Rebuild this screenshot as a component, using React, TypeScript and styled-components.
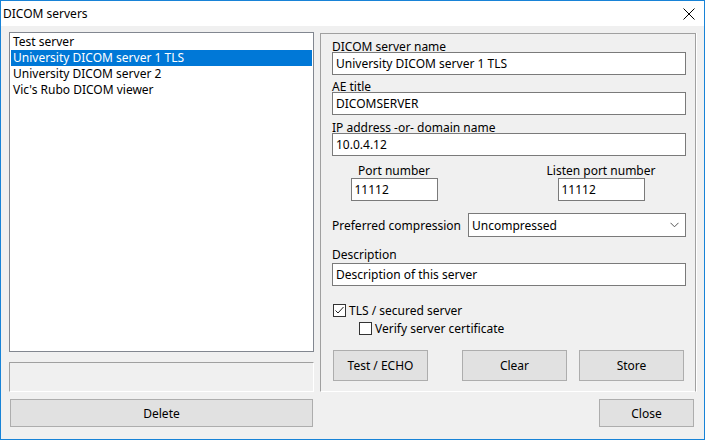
import React from 'react'
import styled, { createGlobalStyle } from 'styled-components'

const GlobalStyle = createGlobalStyle`
  html, body {
    margin: 0;
    padding: 0;
    background: #f0f0f0;
  }
  body {
    font-family: 'Noto Sans', 'Liberation Sans', sans-serif;
    font-size: 12px;
    color: #000;
  }
`

const Window = styled.div`
  width: 705px;
  height: 440px;
  box-sizing: border-box;
  border: 1px solid #1883d7;
  background: #f0f0f0;
  display: flex;
  flex-direction: column;
`

const TitleBar = styled.div`
  height: 25px;
  background: #fff;
  display: flex;
  align-items: center;
  justify-content: space-between;
  padding: 0 9px 0 2px;
`

const TitleText = styled.span`
  font-size: 12px;
  line-height: 16px;
`

const Body = styled.div`
  flex: 1;
  display: flex;
  flex-direction: column;
  padding: 6px 8px 11px 8px;
`

const Main = styled.div`
  display: grid;
  grid-template-columns: 305px 1fr;
  column-gap: 6px;
`

const LeftColumn = styled.div`
  display: flex;
  flex-direction: column;
`

const ListBox = styled.div`
  height: 320px;
  box-sizing: border-box;
  background: #fff;
  border: 1px solid #828790;
  padding: 1px;
`

const ListItem = styled.div<{ $selected?: boolean }>`
  height: 16px;
  line-height: 16px;
  padding-left: 2px;
  white-space: nowrap;
  background: ${({ $selected }) => ($selected ? '#0078d7' : 'transparent')};
  color: ${({ $selected }) => ($selected ? '#fff' : '#000')};
`

const StatusBox = styled.div`
  margin-top: 10px;
  height: 30px;
  box-sizing: border-box;
  border: 1px solid #a0a0a0;
  border-right-color: #fff;
  border-bottom-color: #fff;
`

const Panel = styled.div`
  margin-top: 1px;
  height: 359px;
  box-sizing: border-box;
  border: 1px solid #a0a0a0;
  border-bottom-color: #fff;
  box-shadow: 1px 0 0 #fff;
  padding: 4px 9px 0 11px;
  display: flex;
  flex-direction: column;
`

// labels sit low, right on top of their box
const FieldLabel = styled.label<{ $top?: number; $below?: number }>`
  display: block;
  line-height: 10px;
  padding-top: ${({ $top }) => ($top === undefined ? 7 : $top)}px;
  margin-bottom: ${({ $below }) => $below || 0}px;
  white-space: nowrap;
`

const TextBox = styled.div<{ $width?: number }>`
  height: 23px;
  box-sizing: border-box;
  width: ${({ $width }) => ($width ? `${$width}px` : '100%')};
  background: #fff;
  border: 1px solid #7a7a7a;
  padding: 0 3px;
  line-height: 21px;
  white-space: nowrap;
`

const PortRow = styled.div`
  display: flex;
  gap: 87px;
  padding-left: 2px;
  margin-top: 10px;
`

const PortField = styled.div`
  width: 120px;
  display: flex;
  flex-direction: column;
  align-items: center;
`

const CompressionRow = styled.div`
  display: flex;
  align-items: center;
  justify-content: space-between;
  margin-top: 12px;
`

const Select = styled.div`
  width: 218px;
  height: 24px;
  box-sizing: border-box;
  background: #fff;
  border: 1px solid #7a7a7a;
  padding: 0 6px 0 3px;
  display: flex;
  align-items: center;
  justify-content: space-between;
`

const CheckList = styled.div`
  margin-top: 17px;
  display: flex;
  flex-direction: column;
  gap: 3px;
`

const CheckRow = styled.div<{ $indent?: number }>`
  display: flex;
  align-items: center;
  gap: 3px;
  padding-left: ${({ $indent }) => $indent || 1}px;
  line-height: 15px;
`

const Box = styled.span`
  width: 13px;
  height: 13px;
  box-sizing: border-box;
  border: 1px solid #333;
  background: #fff;
  display: inline-flex;
  align-items: center;
  justify-content: center;
`

const ButtonRow = styled.div`
  display: flex;
  margin-top: 14px;
  padding-left: 1px;
`

const Button = styled.button<{ $width: number; $height?: number; $gap?: number }>`
  width: ${({ $width }) => $width}px;
  height: ${({ $height }) => $height || 31}px;
  margin-left: ${({ $gap }) => $gap || 0}px;
  box-sizing: border-box;
  background: #e1e1e1;
  border: 1px solid #adadad;
  font-family: inherit;
  font-size: 12px;
  color: #000;
  padding: 0;
`

const Footer = styled.div`
  display: flex;
  justify-content: space-between;
  margin-top: 7px;
  padding: 0 2px 0 1px;
`

const Check = () => (
  <svg width="11" height="11" viewBox="0 0 11 11">
    <path d="M1.5 5.5 L4 8 L9.5 2" fill="none" stroke="#222" strokeWidth="1" />
  </svg>
)

const Chevron = () => (
  <svg width="9" height="6" viewBox="0 0 9 6">
    <path d="M0.5 0.8 L4.5 4.8 L8.5 0.8" fill="none" stroke="#555" strokeWidth="1" />
  </svg>
)

const CloseGlyph = () => (
  <svg width="12" height="12" viewBox="0 0 12 12">
    <path d="M0.5 0.5 L11.5 11.5 M11.5 0.5 L0.5 11.5" stroke="#000" strokeWidth="1" />
  </svg>
)

const servers = ['Test server', 'University DICOM server 1 TLS', 'University DICOM server 2', "Vic's Rubo DICOM viewer"]

const App: React.FC = () => {
  const selected = 1

  return (
    <Window>
      <GlobalStyle />
      <TitleBar>
        <TitleText>DICOM servers</TitleText>
        <CloseGlyph />
      </TitleBar>
      <Body>
        <Main>
          <LeftColumn>
            <ListBox>
              {servers.map((name, i) => (
                <ListItem key={name} $selected={i === selected}>{name}</ListItem>
              ))}
            </ListBox>
            <StatusBox />
          </LeftColumn>
          <Panel>
            <FieldLabel $top={4}>DICOM server name</FieldLabel>
            <TextBox>University DICOM server 1 TLS</TextBox>
            <FieldLabel>AE title</FieldLabel>
            <TextBox>DICOMSERVER</TextBox>
            <FieldLabel $top={8}>IP address -or- domain name</FieldLabel>
            <TextBox>10.0.4.12</TextBox>
            <PortRow>
              <PortField>
                <FieldLabel $top={0} $below={2}>Port number</FieldLabel>
                <TextBox $width={87}>11112</TextBox>
              </PortField>
              <PortField>
                <FieldLabel $top={0} $below={2}>Listen port number</FieldLabel>
                <TextBox $width={87}>11112</TextBox>
              </PortField>
            </PortRow>
            <CompressionRow>
              <span>Preferred compression</span>
              <Select>
                <span>Uncompressed</span>
                <Chevron />
              </Select>
            </CompressionRow>
            <FieldLabel $top={13} $below={3}>Description</FieldLabel>
            <TextBox>Description of this server</TextBox>
            <CheckList>
              <CheckRow>
                <Box><Check /></Box>
                TLS / secured server
              </CheckRow>
              <CheckRow $indent={27}>
                <Box />
                Verify server certificate
              </CheckRow>
            </CheckList>
            <ButtonRow>
              <Button $width={95}>Test / ECHO</Button>
              <Button $width={105} $gap={34}>Clear</Button>
              <Button $width={105} $gap={12}>Store</Button>
            </ButtonRow>
          </Panel>
        </Main>
        <Footer>
          <Button $width={303} $height={28}>Delete</Button>
          <Button $width={95} $height={28}>Close</Button>
        </Footer>
      </Body>
    </Window>
  )
}

export default App
